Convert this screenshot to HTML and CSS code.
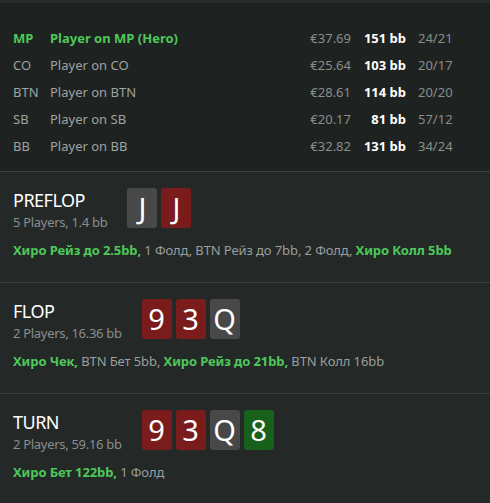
FILE: index.html
```html
<!DOCTYPE html>
<html lang="ru">
<head>
<meta charset="utf-8">
<link rel="stylesheet" href="styles.css">
</head>
<body>
<div class="top-strip"></div>
<div class="players">
  <div class="row hero"><span class="pos">MP</span><span class="name">Player on MP (Hero)</span><span class="money">€37.69</span><span class="bb">151 bb</span><span class="ratio">24/21</span></div>
  <div class="row"><span class="pos">CO</span><span class="name">Player on CO</span><span class="money">€25.64</span><span class="bb">103 bb</span><span class="ratio">20/17</span></div>
  <div class="row"><span class="pos">BTN</span><span class="name">Player on BTN</span><span class="money">€28.61</span><span class="bb">114 bb</span><span class="ratio">20/20</span></div>
  <div class="row"><span class="pos">SB</span><span class="name">Player on SB</span><span class="money">€20.17</span><span class="bb">81 bb</span><span class="ratio">57/12</span></div>
  <div class="row"><span class="pos">BB</span><span class="name">Player on BB</span><span class="money">€32.82</span><span class="bb">131 bb</span><span class="ratio">34/24</span></div>
</div>

<section class="street">
  <div class="head">
    <div class="info">
      <div class="title">PREFLOP</div>
      <div class="sub">5 Players, 1.4 bb</div>
    </div>
    <div class="cards">
      <span class="card grey">J</span><span class="card red">J</span>
    </div>
  </div>
  <div class="actions"><b>Хиро Рейз до 2.5bb,</b> 1 Фолд, BTN Рейз до 7bb, 2 Фолд, <b>Хиро Колл 5bb</b></div>
</section>

<section class="street">
  <div class="head">
    <div class="info">
      <div class="title">FLOP</div>
      <div class="sub">2 Players, 16.36 bb</div>
    </div>
    <div class="cards">
      <span class="card red">9</span><span class="card red">3</span><span class="card grey">Q</span>
    </div>
  </div>
  <div class="actions"><b>Хиро Чек,</b> BTN Бет 5bb, <b>Хиро Рейз до 21bb,</b> BTN Колл 16bb</div>
</section>

<section class="street">
  <div class="head">
    <div class="info">
      <div class="title">TURN</div>
      <div class="sub">2 Players, 59.16 bb</div>
    </div>
    <div class="cards">
      <span class="card red">9</span><span class="card red">3</span><span class="card grey">Q</span><span class="card green">8</span>
    </div>
  </div>
  <div class="actions"><b>Хиро Бет 122bb,</b> 1 Фолд</div>
</section>
</body>
</html>
```
FILE: styles.css
```css
* { box-sizing: border-box; }
html, body {
  margin: 0;
  padding: 0;
  background: #242928;
  font-family: "Noto Sans", "Open Sans", sans-serif;
  font-size: 13px;
  color: #9ea2a2;
}
.top-strip {
  height: 3px;
  background: #282d2b;
}
.players {
  background: #1e2220;
  padding: 21px 0 12px 13px;
  border-bottom: 1px solid #3a3f3d;
}
.row {
  display: grid;
  grid-template-columns: 37px 1fr 61px 55px 84px;
  height: 27px;
  align-items: center;
  line-height: 18px;
}
.row .money { text-align: right; color: #8a8e8d; }
.row .bb { text-align: right; color: #ffffff; font-weight: 700; }
.row .ratio { padding-left: 12px; color: #8a8e8d; }
.row.hero .pos, .row.hero .name { color: #4ec85a; font-weight: 700; }

.street {
  height: 111px;
  padding: 16px 13px 0 13px;
  border-bottom: 1px solid #3a3f3d;
  background: #242928;
}
.head {
  display: flex;
  align-items: flex-start;
  gap: 20px;
  height: 40px;
}
.info {
  padding-top: 0;
}
.title {
  color: #ffffff;
  font-size: 18px;
  letter-spacing: -0.5px;
  line-height: 25px;
}
.sub {
  color: #8a8e8d;
  font-size: 13px;
  letter-spacing: -0.3px;
  line-height: 18px;
}
.cards {
  display: flex;
  gap: 4px;
}
.card {
  width: 30px;
  height: 40px;
  border-radius: 3px;
  color: #ffffff;
  font-size: 29px;
  line-height: 40px;
  text-align: center;
}
.card.grey { background: #484848; }
.card.red { background: #7a1c1c; }
.card.green { background: #17611a; }
.actions {
  margin-top: 13px;
  line-height: 18px;
  color: #9a9e9d;
  white-space: nowrap;
  letter-spacing: -0.1px;
}
.actions b { color: #4ec85a; font-weight: 700; }
```
